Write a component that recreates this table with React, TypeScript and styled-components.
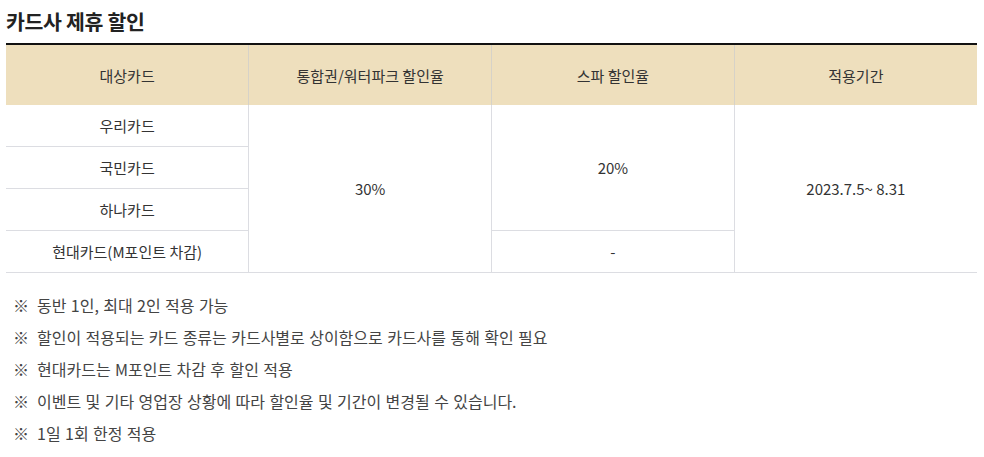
import React from "react";
import styled, { createGlobalStyle } from "styled-components";

const GlobalStyle = createGlobalStyle`
  body {
    margin: 0;
    background: #fff;
    font-family: "Noto Sans CJK KR", "Noto Sans", sans-serif;
    color: #333;
  }
`;

const Wrap = styled.section`
  padding: 6px 7px 0 6px;
`;

const Title = styled.h3`
  margin: 0 0 7px;
  font-size: 20.5px;
  font-weight: 700;
  line-height: 30px;
  color: #222;
  letter-spacing: -0.3px;
`;

const Table = styled.table`
  width: 100%;
  border-collapse: collapse;
  border-top: 2px solid #111;
  table-layout: fixed;
  font-size: 15px;
`;

const Th = styled.th`
  height: 58px;
  background: #eedfbd;
  font-weight: 400;
  color: #333;
  border-left: 1px solid #d6d2c8;
  &:first-child {
    border-left: 0;
  }
`;

const Td = styled.td<{ $first?: boolean }>`
  height: 41px;
  padding: 0;
  text-align: center;
  color: #333;
  border-bottom: 1px solid #dcdde2;
  border-left: ${(p) => (p.$first ? "0" : "1px solid #dcdde2")};
  vertical-align: middle;
`;

const Notes = styled.ul`
  list-style: none;
  margin: 16px 0 0;
  padding: 0 0 0 7px;
`;

const Note = styled.li`
  font-size: 16px;
  line-height: 32px;
  color: #444;
  word-spacing: 0.8px;
  &::before {
    content: "※";
    margin-right: 8px;
  }
`;

const notes = [
  "동반 1인, 최대 2인 적용 가능",
  "할인이 적용되는 카드 종류는 카드사별로 상이함으로 카드사를 통해 확인 필요",
  "현대카드는 M포인트 차감 후 할인 적용",
  "이벤트 및 기타 영업장 상황에 따라 할인율 및 기간이 변경될 수 있습니다.",
  "1일 1회 한정 적용",
];

const App = () => {
  return (
    <Wrap>
      <GlobalStyle />
      <Title>카드사 제휴 할인</Title>
      <Table>
        <thead>
          <tr>
            <Th>대상카드</Th>
            <Th>통합권/워터파크 할인율</Th>
            <Th>스파 할인율</Th>
            <Th>적용기간</Th>
          </tr>
        </thead>
        <tbody>
          <tr>
            <Td $first>우리카드</Td>
            <Td rowSpan={4}>30%</Td>
            <Td rowSpan={3}>20%</Td>
            <Td rowSpan={4}>2023.7.5~ 8.31</Td>
          </tr>
          <tr>
            <Td $first>국민카드</Td>
          </tr>
          <tr>
            <Td $first>하나카드</Td>
          </tr>
          <tr>
            <Td $first>현대카드(M포인트 차감)</Td>
            <Td>-</Td>
          </tr>
        </tbody>
      </Table>
      <Notes>
        {notes.map((n) => (
          <Note key={n}>{n}</Note>
        ))}
      </Notes>
    </Wrap>
  );
};

export default App;
